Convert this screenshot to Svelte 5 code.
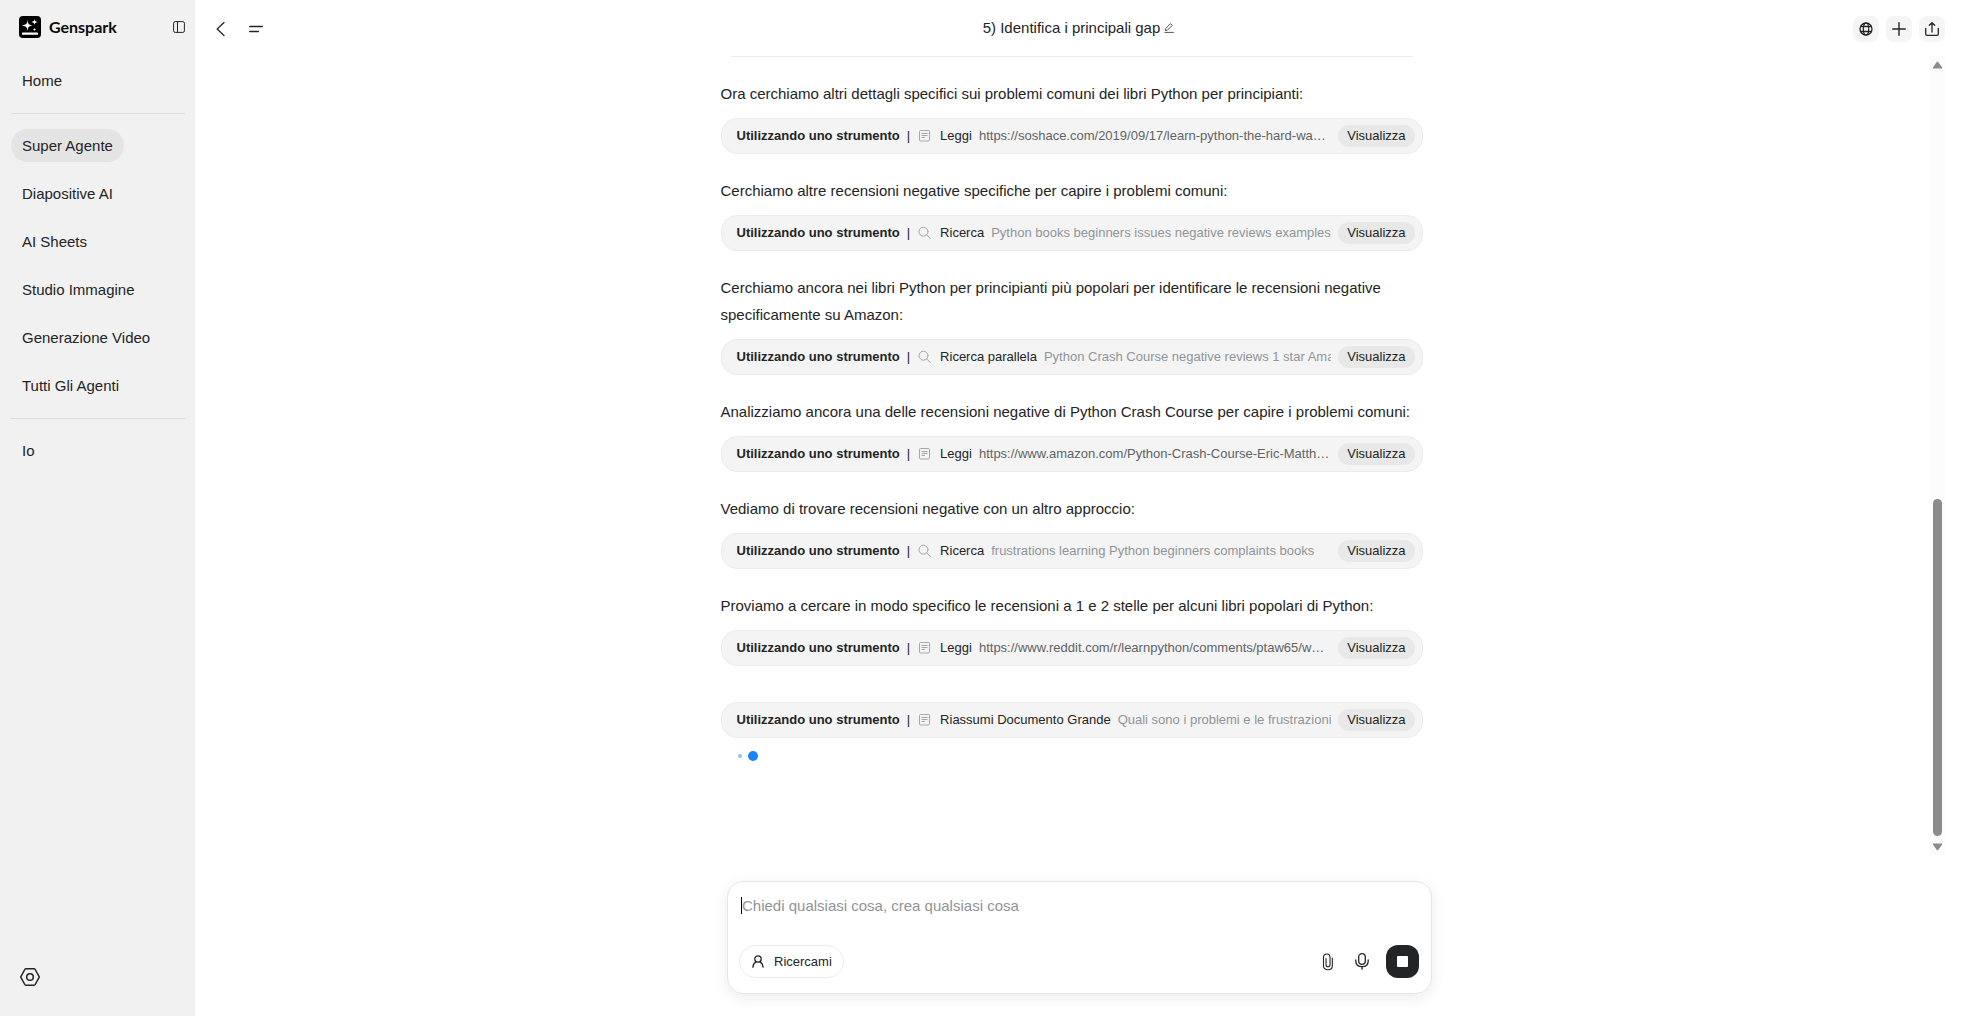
<script>
  const nav = ['Super Agente', 'Diapositive AI', 'AI Sheets', 'Studio Immagine', 'Generazione Video', 'Tutti Gli Agenti'];

  const steps = [
    { text: 'Ora cerchiamo altri dettagli specifici sui problemi comuni dei libri Python per principianti:', icon: 'doc', tool: 'Leggi', arg: 'https://soshace.com/2019/09/17/learn-python-the-hard-way-review/', url: true },
    { text: 'Cerchiamo altre recensioni negative specifiche per capire i problemi comuni:', icon: 'search', tool: 'Ricerca', arg: 'Python books beginners issues negative reviews examples' },
    { text: 'Cerchiamo ancora nei libri Python per principianti più popolari per identificare le recensioni negative specificamente su Amazon:', icon: 'search', tool: 'Ricerca parallela', arg: 'Python Crash Course negative reviews 1 star Amazon' },
    { text: 'Analizziamo ancora una delle recensioni negative di Python Crash Course per capire i problemi comuni:', icon: 'doc', tool: 'Leggi', arg: 'https://www.amazon.com/Python-Crash-Course-Eric-Matthes/dp', url: true },
    { text: 'Vediamo di trovare recensioni negative con un altro approccio:', icon: 'search', tool: 'Ricerca', arg: 'frustrations learning Python beginners complaints books' },
    { text: 'Proviamo a cercare in modo specifico le recensioni a 1 e 2 stelle per alcuni libri popolari di Python:', icon: 'doc', tool: 'Leggi', arg: 'https://www.reddit.com/r/learnpython/comments/ptaw65/what_book', url: true },
    { text: '', icon: 'doc', tool: 'Riassumi Documento Grande', arg: 'Quali sono i problemi e le frustrazioni' }
  ];

  let message = $state('');
</script>

<div class="app">
  <aside class="sidebar">
    <div class="brand">
      <a class="logo" href="#home">
        <svg width="22" height="22" viewBox="0 0 22 22" aria-hidden="true">
          <rect width="22" height="22" rx="4" fill="#000" />
          <path d="M8.500 4C9 8 9.500 8.700 13.500 9.500C9.500 10.300 9 11 8.500 15C8 11 7.500 10.300 2.500 9.500C7.500 8.700 8 8 8.500 4Z" fill="#fff" />
          <path d="M15.500 3C15.800 5 16.200 5.500 18.500 6C16.200 6.500 15.800 7 15.500 9C15.200 7 14.800 6.500 12.500 6C14.800 5.500 15.200 5 15.500 3Z" fill="#fff" />
          <path d="M15.500 11.500C15.700 13 16 13.300 17.300 13.500C16 13.700 15.700 14 15.500 15.300C15.300 14 15 13.700 13.700 13.500C15 13.300 15.300 13 15.500 11.500Z" fill="#fff" />
          <rect x="3" y="16.500" width="16" height="2.300" rx="0.600" fill="#fff" />
        </svg>
        <span>Genspark</span>
      </a>
      <button class="plain" aria-label="Comprimi barra laterale">
        <svg width="12" height="12" viewBox="0 0 12 12" fill="none" stroke="#232425" aria-hidden="true">
          <rect x="0.600" y="0.600" width="10.800" height="10.800" rx="1.600" />
          <path d="M4.500 0.600V11.400" />
        </svg>
      </button>
    </div>
    <nav>
      <a href="#home"><span>Home</span></a>
      <hr />
      {#each nav as item, i}
        <a href="#{i}" class:active={i === 0}><span>{item}</span></a>
      {/each}
      <hr />
      <a href="#io"><span>Io</span></a>
    </nav>
    <button class="plain settings" aria-label="Impostazioni">
      <svg width="20" height="18" viewBox="0 0 20 18" fill="none" stroke="#232425" stroke-width="1.500" stroke-linejoin="round" aria-hidden="true">
        <path d="M6 0.800H14Q14.800 0.800 15.200 1.500L19 8.300Q19.400 9 19 9.700L15.200 16.500Q14.800 17.200 14 17.200H6Q5.200 17.200 4.800 16.500L1 9.700Q0.600 9 1 8.300L4.800 1.500Q5.200 0.800 6 0.800Z" />
        <circle cx="10" cy="9" r="3.300" />
      </svg>
    </button>
  </aside>

  <main>
    <header>
      <div class="left">
        <button class="plain" aria-label="Indietro">
          <svg width="10" height="16" viewBox="0 0 10 16" fill="none" stroke="#232425" stroke-width="1.300" stroke-linecap="round" stroke-linejoin="round" aria-hidden="true"><path d="M8 1.500L1.200 8L8 14.500" /></svg>
        </button>
        <button class="plain" aria-label="Menu">
          <svg width="14" height="16" viewBox="0 0 14 16" fill="none" stroke="#232425" stroke-width="1.300" stroke-linecap="round" aria-hidden="true"><path d="M0.700 5.500H13.300M0.700 10.500H9.500" /></svg>
        </button>
      </div>
      <h1>
        5) Identifica i principali gap
        <button class="plain" aria-label="Modifica titolo">
          <svg width="10" height="10" viewBox="0 0 10 10" fill="none" stroke="#404244" stroke-width="0.900" stroke-linejoin="round" aria-hidden="true"><path d="M1.500 7.500L1.800 5.400L6.500 0.700L8.300 2.400L3.600 7.100Z M0.500 9.400H9.800" /></svg>
        </button>
      </h1>
      <div class="right">
        <button aria-label="Lingua">
          <svg width="14" height="14" viewBox="0 0 14 14" fill="none" stroke="#232425" stroke-width="1.300" aria-hidden="true"><circle cx="7" cy="7" r="6" /><ellipse cx="7" cy="7" rx="2.700" ry="6" stroke-width="1.200" /><path d="M1.500 4.500H12.500M1.500 9.500H12.500" /></svg>
        </button>
        <button aria-label="Nuovo">
          <svg width="14" height="14" viewBox="0 0 14 14" fill="none" stroke="#232425" stroke-width="1.400" stroke-linecap="round" aria-hidden="true"><path d="M7 0.800V13.200M0.800 7H13.200" /></svg>
        </button>
        <button aria-label="Condividi">
          <svg width="14" height="14" viewBox="0 0 14 14" fill="none" stroke="#232425" stroke-width="1.300" stroke-linecap="round" stroke-linejoin="round" aria-hidden="true"><path d="M0.700 6.500V12Q0.700 13.300 2 13.300H12Q13.300 13.300 13.300 12V6.500M7 10V0.800M4.300 3.200L7 0.700L9.700 3.200" /></svg>
        </button>
      </div>
    </header>

    <div class="chat">
      <div class="scroll">
        <div class="thread">
          <hr />
          {#each steps as step}
            <section>
              {#if step.text}<p>{step.text}</p>{/if}
              <div class="tool">
                <strong>Utilizzando uno strumento</strong>
                <span>|</span>
                {#if step.icon === 'doc'}
                  <svg width="16" height="14" viewBox="-1 0 16 14" fill="none" stroke="#a5a7a9" aria-hidden="true"><rect x="1.500" y="1.500" width="10" height="10.500" rx="1" /><path d="M3.500 4.500H9.500M3.500 6.500H9.500M3.500 8.500H7" /></svg>
                {:else}
                  <svg width="16" height="14" viewBox="-1 0 16 14" fill="none" stroke="#a5a7a9" stroke-linecap="round" aria-hidden="true"><circle cx="5.500" cy="5.700" r="4.500" /><path d="M8.800 9L12.300 12.500" /></svg>
                {/if}
                <span>{step.tool}</span>
                <span class="arg" class:url={step.url}>{step.arg}</span>
                <button>Visualizza</button>
              </div>
            </section>
          {/each}
          <div class="typing"><i class="small"></i><i></i></div>
        </div>
      </div>
      <div class="scrollbar" aria-hidden="true">
        <svg width="11" height="8" viewBox="0 0 11 8"><path d="M5.500 0.800L10 7H1Z" fill="#8b8b8b" stroke="#8b8b8b" stroke-linejoin="round" /></svg>
        <div class="track"><div class="thumb"></div></div>
        <svg width="11" height="8" viewBox="0 0 11 8"><path d="M5.500 7.200L10 1H1Z" fill="#8b8b8b" stroke="#8b8b8b" stroke-linejoin="round" /></svg>
      </div>
    </div>

    <form class="composer">
      <div class="field">
        <textarea rows="1" aria-label="Messaggio" placeholder="Chiedi qualsiasi cosa, crea qualsiasi cosa" bind:value={message}></textarea>
        <span class="caret"></span>
      </div>
      <div class="actions">
        <button type="button" class="chip">
          <svg width="12" height="13" viewBox="0 0 12 13" fill="none" stroke="#232425" stroke-width="1.300" stroke-linecap="round" aria-hidden="true"><circle cx="6" cy="4" r="3.200" /><path d="M0.900 12.200Q1.300 8.300 4 6.900M11.100 12.200Q10.700 8.300 8 6.900" /></svg>
          Ricercami
        </button>
        <div class="inputs">
          <button type="button" class="plain" aria-label="Allega file">
            <svg width="12" height="18" viewBox="0 0 12 18" fill="none" stroke="#232425" stroke-width="1.100" stroke-linecap="round" aria-hidden="true"><path d="M10.300 5V12.500Q10.300 16.800 6 16.800Q1.500 16.800 1.500 12.500V4.500Q1.500 1 4.800 1Q8 1 8 4.500V11.800Q8 13.800 6 13.800Q4 13.800 4 11.800V5.500" /></svg>
          </button>
          <button type="button" class="plain" aria-label="Registra">
            <svg width="14" height="17" viewBox="0 0 14 17" fill="none" stroke="#232425" stroke-width="1.300" stroke-linecap="round" aria-hidden="true"><rect x="3.700" y="0.700" width="6.600" height="10.600" rx="3.300" /><path d="M0.800 6.800V8Q0.800 13.700 7 13.700Q13.200 13.700 13.200 8V6.800M7 13.700V16.200" /></svg>
          </button>
        </div>
        <button type="button" class="stop" aria-label="Interrompi"><i></i></button>
      </div>
    </form>
  </main>
</div>

<style>
  :global(body) {
    margin: 0;
    background: #fff;
    color: #232425;
    font: 15px/26px "Liberation Sans", Arial, sans-serif;
  }
  * { box-sizing: border-box; }
  .app { display: flex; height: 100vh; }
  a { color: inherit; text-decoration: none; }
  button { border: 0; font: inherit; color: inherit; cursor: pointer; }
  svg { display: block; flex: none; }
  hr { border: 0; height: 1px; width: 100%; }
  .plain { background: none; padding: 0; }

  .sidebar {
    flex: 0 0 195px;
    display: flex;
    flex-direction: column;
    align-items: stretch;
    background: #f1f1f1;
    padding: 0 10px 0 11px;
  }
  .brand {
    height: 56px;
    display: flex;
    align-items: center;
    justify-content: space-between;
    padding: 0 0 2px 8px;
  }
  .logo { display: flex; align-items: center; gap: 8px; font: 700 16px/24px Lato, sans-serif; color: #0b0b0b; }
  nav { flex: 1; display: flex; flex-direction: column; align-items: flex-start; }
  nav a { height: 48px; display: flex; align-items: center; }
  nav span { line-height: 33px; padding: 0 11px; border-radius: 17px; }
  .active span { background: #e4e4e4; }
  nav hr { margin: 9px 0 7px; background: #dcdcdc; }
  .settings { align-self: flex-start; margin: 0 9px 30px; }

  main { flex: 1; min-width: 0; display: flex; flex-direction: column; }
  header {
    flex: 0 0 56px;
    display: grid;
    grid-template-columns: 1fr auto 1fr;
    align-items: center;
    padding: 2px 19px 0 21px;
  }
  .left { display: flex; gap: 23px; }
  h1 { margin: 0; padding: 0 4px 2px 0; display: flex; align-items: center; gap: 4px; font-size: 15px; font-weight: 400; }
  .right { display: flex; justify-content: flex-end; gap: 7px; }
  .right button {
    width: 26px;
    height: 26px;
    padding: 0;
    display: grid;
    place-items: center;
    border-radius: 8px;
    background: #f5f5f5;
  }

  .chat { flex: 1; min-height: 0; display: flex; padding-right: 19px; }
  .scroll { flex: 1; min-width: 0; overflow: hidden; padding-left: 18px; }
  .thread { width: 100%; max-width: 702px; margin: 0 auto; }
  .thread hr { width: auto; margin: 0 10px; background: #ececec; }
  section { padding-top: 23px; }
  section:nth-of-type(7) { padding-top: 36px; }
  p { margin: 0 0 11px; line-height: 27px; }
  .tool {
    height: 36px;
    display: flex;
    align-items: center;
    gap: 7px;
    padding: 0 7px 0 15px;
    border: 1px solid #ebebeb;
    border-radius: 16px;
    background: #f4f4f4;
    font-size: 13px;
    line-height: 22px;
    white-space: nowrap;
  }
  .arg { flex: 1; min-width: 0; overflow: hidden; color: #909499; }
  .url { color: #606366; text-overflow: ellipsis; }
  .tool button { padding: 0 9px; border-radius: 11px; background: #e8e8e8; line-height: 22px; }
  .typing { display: flex; align-items: center; gap: 6px; padding: 13px 17px; }
  .typing i { width: 10px; height: 10px; border-radius: 50%; background: #1783ff; }
  .typing .small { width: 4px; height: 4px; background: #8bc1ff; }

  .scrollbar {
    flex: 0 0 15px;
    display: flex;
    flex-direction: column;
    align-items: center;
    gap: 7px;
    padding: 5px 0 4px;
    background: #fcfcfc;
  }
  .track { flex: 1; display: flex; flex-direction: column; justify-content: flex-end; }
  .thumb { width: 9px; height: 44.4%; border-radius: 5px; background: #8b8b8b; }

  .composer {
    width: calc(100% - 40px);
    max-width: 705px;
    margin: 26px auto 22px;
    padding: 11px 12px 15px 11px;
    border: 1px solid #e6e6e6;
    border-radius: 16px;
    background: #fff;
    box-shadow: 0 4px 16px rgba(0, 0, 0, 0.08);
  }
  .field { position: relative; padding: 0 3px; }
  textarea {
    display: block;
    width: 100%;
    height: 26px;
    margin-bottom: 26px;
    padding: 0;
    border: 0;
    outline: 0;
    resize: none;
    background: none;
    color: inherit;
    font: inherit;
  }
  textarea::placeholder { color: #909499; opacity: 1; }
  .caret { position: absolute; left: 2px; top: 4px; width: 1px; height: 17px; background: #000; }
  .actions { display: flex; align-items: center; gap: 17px; }
  .inputs { display: flex; align-items: center; gap: 21px; margin-left: auto; }
  .chip {
    display: flex;
    align-items: center;
    gap: 10px;
    height: 33px;
    padding: 0 11px 0 12px;
    border: 1px solid #ebebeb;
    border-radius: 17px;
    background: #fff;
    font-size: 13px;
  }
  .stop {
    width: 33px;
    height: 33px;
    padding: 0;
    display: grid;
    place-items: center;
    border-radius: 12px;
    background: #232425;
  }
  .stop i { width: 11px; height: 11px; border-radius: 1px; background: #fff; }
</style>
